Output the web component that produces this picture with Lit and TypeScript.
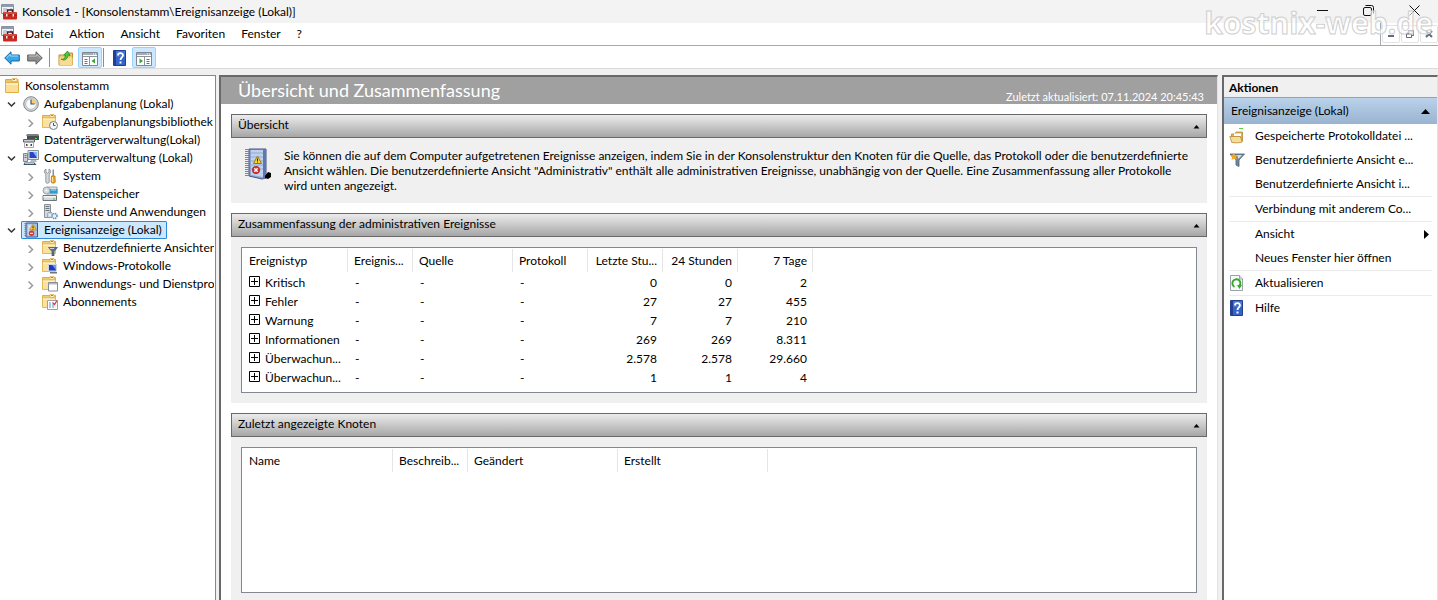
import { LitElement, html, css, svg, nothing, TemplateResult } from "lit";
import { customElement, property, state } from "lit/decorators.js";
import { classMap } from "lit/directives/class-map.js";

const base = css`
  * { box-sizing: border-box; }
  button {
    font: inherit;
    color: inherit;
    background: none;
    border: 0;
    padding: 0;
    margin: 0;
    text-align: left;
    white-space: nowrap;
  }
  svg { display: block; flex: none; }
`;

const folder = svg`
  <path d="M1.500 1.500H14v4H1.500z" fill="#ecc566" stroke="#d9a943"/>
  <path d="M8 .5h5v3H8z" fill="#fdf1cc" stroke="#d9a943" stroke-width=".7"/><path d="M9 1h2v1H9z" fill="#5b93c9"/>
  <path d="M1.500 4.500h13v10h-13z" fill="#fbdf96" stroke="#dfb04c"/>
  <path d="M2 5h12v2H2z" fill="#fdecbc"/>`;
const smallFolder = svg`
  <path d="M.5 1.500h13v4H.5z" fill="#efcb74" stroke="#dcae4c"/>
  <path d="M8 .5h4v3H8z" fill="#fdf1cc" stroke="#d9a943" stroke-width=".7"/><path d="M9 1h2v1H9z" fill="#5b93c9"/>
  <path d="M.5 4h13v9.500H.5z" fill="#fbe1a0" stroke="#e2b85c"/><path d="M1 4.500h12V6H1z" fill="#fdefc4"/>`;
const gear = svg`
  <circle cx="8" cy="11" r="2.500" fill="#e8f0f6" stroke="#7f97aa" stroke-width="1.500" stroke-dasharray="1.300 .7"/>
  <circle cx="12.500" cy="12" r="2.500" fill="#e8f0f6" stroke="#5e8db0" stroke-width="1.500" stroke-dasharray="1.300 .7"/>`;

const art: Record<string, TemplateResult> = {
  mmc: svg`
    <path d="M.5 .5h12v9H.5z" fill="#f2f4f7" stroke="#8a93a0"/><path d="M1 1h11v2H1z" fill="#8e9bb0"/>
    <path d="M2 5h4M2 7h3M9 5h2" stroke="#9aa5b5"/>
    <path d="M6.500 8V6h5v2" fill="none" stroke="#3a2020" stroke-width="1.500"/>
    <rect x="2" y="8" width="14" height="7.500" rx="1" fill="#c62a20"/>
    <path d="M2 11h14" stroke="#9c1f18"/><path d="M3 9h12" stroke="#e8685c"/>
    <path d="M5 10h1.500v2.500H5zM11.500 10H13v2.500h-1.500z" fill="#f4e6e3"/>`,
  back: svg`<path d="M.7 8 7 1.800V5h8.300v6H7v3.200z" fill="#37a8e8" stroke="#1667a8"/><path d="M2.500 8 6.200 4.300V6h8" fill="none" stroke="#9fdcfb"/>`,
  forward: svg`<path d="M15.300 8 9 1.800V5H.7v6H9v3.200z" fill="#8e8e8e" stroke="#5c5c5c"/><path d="M13.500 8 9.800 4.300V6h-8" fill="none" stroke="#c4c4c4"/>`,
  up: svg`<path d="M1 5h6l1-2h6.500v12H1z" fill="#efc76e" stroke="#bd8f35"/><path d="M1.500 7.500h13V15h-13z" fill="#f9dc92"/>
    <path d="M3 9c2 1 4-.5 4.500-4L5.800 5 9.500 1l2.700 4.500-1.900-.3C9.500 9 6.500 11.500 3 9z" fill="#4cc93a" stroke="#21871a" stroke-width=".7"/>`,
  paneLeft: svg`<path d="M.5 2.500h15v13H.5z" fill="#fff" stroke="#82878f"/><path d="M1 3h14v2H1z" fill="#a6acb5"/><path d="M11 4h1M13 4h1" stroke="#fff"/>
    <path d="M1 6.500h14M7.500 7v8" stroke="#8d939c"/><path d="M2.500 9.500h3M2.500 11.500h3M2.500 13.500h3" stroke="#4d74b3"/><path d="M13 8.500v5L9.500 11z" fill="#38a52c"/>`,
  paneRight: svg`<path d="M.5 2.500h15v13H.5z" fill="#fff" stroke="#82878f"/><path d="M1 3h14v2H1z" fill="#a6acb5"/><path d="M11 4h1M13 4h1" stroke="#fff"/>
    <path d="M1 6.500h14M8.500 7v8" stroke="#8d939c"/><path d="M10.500 9.500h3M10.500 11.500h3M10.500 13.500h3" stroke="#4d74b3"/><path d="M3.500 8.500v5L7 11z" fill="#38a52c"/>`,
  help: svg`<path d="M1.500 .5H13.500v15h-12z" fill="#3763c6" stroke="#1f3f91"/><path d="M2 1h2v14H2z" fill="#213f94"/><path d="M4 1h9v6H4z" fill="#5480da" opacity=".6"/>
    <path d="M6 5.500C6 2.500 11 2.500 11 5.300 11 7.300 8.500 7.500 8.500 10" fill="none" stroke="#fff" stroke-width="1.800"/><path d="M7.500 11.500h2v2h-2z" fill="#fff"/>`,
  folder,
  clock: svg`<circle cx="8" cy="8" r="7.300" fill="#d6d9dc" stroke="#7f858b"/><circle cx="8" cy="8" r="5.300" fill="#fbfbf6" stroke="#a9aeb3" stroke-width=".7"/>
    <path d="M8 8V2.800A5.200 5.200 0 0 1 13.200 8z" fill="#f3cf7a"/><path d="M8 3.500V8h3.500" fill="none" stroke="#43566e" stroke-width="1.200"/>`,
  folderClock: svg`${smallFolder}<circle cx="11.500" cy="11.500" r="4" fill="#f4f6f7" stroke="#767e86"/><path d="M11.500 9v2.500h2" fill="none" stroke="#43566e"/>`,
  disk: svg`<path d="M4 2h11l1 2v4H4z" fill="#4b4d50"/><path d="M4 2h11l1 2H3z" fill="#7c7f82"/><path d="M12 6h2v1h-2z" fill="#55e04b"/>
    <path d="M.5 7.500h11V10H.5z" fill="#c9cccf" stroke="#5f6367"/><path d="M1.500 10.500h9v5h-9z" fill="#fafafa" stroke="#a5a9ad"/><path d="M3 12h1.500v2H3zM7.500 12H9v2H7.500z" fill="#444"/>`,
  computer: svg`<path d="M5 .5h10.500v9H5z" fill="#dfe3e8" stroke="#8a9098"/><path d="M6.500 2H14v6H6.500z" fill="#2445c8"/><path d="M10 2h4v6z" fill="#8fb0f2"/>
    <path d="M8 10h5l1 2H7z" fill="#b6bbc1"/><path d="M.5 3.500h4v8h-4z" fill="#cdd2d8" stroke="#7f868e"/><path d="M1.500 5.500h2M1.500 7.500h2" stroke="#6c737b"/>
    <path d="M1.500 12.500h10l2 2.500H.5z" fill="#3d546d"/><path d="M2 13.500h9" stroke="#b7c8d8"/>`,
  tools: svg`<path d="M4 1v3.200l1.500 1L7 4.200V1c2 .8 2.200 4 .2 5.200V14c0 1.700-3.400 1.700-3.400 0V6.200C1.800 5 2 1.800 4 1z" fill="#d5d9dd" stroke="#7d848c" stroke-width=".8"/>
    <path d="M10.500 1.500H12V8h-1.500z" fill="#8c939b"/><path d="M9.500 8H13l.3 6c0 1.500-4.200 1.500-4.200 0z" fill="#eda52a" stroke="#ad6d0d" stroke-width=".7"/><path d="M10.500 9v5" stroke="#ffe09a"/>`,
  storage: svg`<path d="M5 1h10v7H5z" fill="#dde1e5" stroke="#8b9198" stroke-width=".8"/><path d="M8 3h7.500v4.500H8z" fill="#2a9fd0"/><path d="M9 4h5" stroke="#a6e4fa"/>
    <ellipse cx="4.500" cy="4.500" rx="3.500" ry="3.500" fill="#d3d8dd" stroke="#8b9198" stroke-width=".8"/><circle cx="4.500" cy="4.500" r="1" fill="#fff"/>
    <path d="M1 9.500h13.500v5H1z" fill="#d4d7da" stroke="#6e757c"/><path d="M1.500 10h12.500v1.500H1.500z" fill="#f5f6f7"/><path d="M11 12.500h2v1h-2z" fill="#3fca35"/>`,
  services: svg`<path d="M2.500 .5h6v13h-6z" fill="#d6dade" stroke="#8a9198"/><path d="M3.500 2.500h4M3.500 4.500h4M3.500 6.500h4" stroke="#6e7780"/>${gear}`,
  events: svg`<path d="M3 1h11.500v14H3z" fill="#a9bde0" stroke="#40558d"/><path d="M5 2.500h3.500v11H5z" fill="#cfdcf2"/><path d="M2.500 1v14" stroke="#777f93" stroke-width="2" stroke-dasharray="1 1"/>
    <path d="M10 2.500 13.500 8h-7z" fill="#f8d22b" stroke="#b98a0a" stroke-width=".7"/><path d="M10 4.200v2M10 6.800v.8" stroke="#3d2c00"/>
    <circle cx="8.500" cy="11.300" r="2.700" fill="#d7342c"/><path d="M7 11.300h3" stroke="#fff" stroke-width="1"/>`,
  folderFilter: svg`${smallFolder}<path d="M6.500 7.500h9l-3.500 4V16h-2v-4.500z" fill="#58738c" stroke="#3d5366" stroke-width=".7"/><path d="M8 8.500h4" stroke="#c6d6e3"/>`,
  folderScreen: svg`${smallFolder}<path d="M6.500 6.500h8v6.500h-8z" fill="#1639c6" stroke="#cfd4db"/><path d="M10 7h4v5z" fill="#6f95f0"/><path d="M8 14h7v1.500H8z" fill="#6d747d"/>`,
  folderApp: svg`${smallFolder}<path d="M6.500 6.500h9v8.500h-9z" fill="#fff" stroke="#868d96"/><path d="M7 7h8v1.500H7z" fill="#b4bac2"/>`,
  folderCalendar: svg`${smallFolder}<path d="M5.500 6.500h10v9h-10z" fill="#fff" stroke="#9aa0a8"/><path d="M7 9h2M7 11h2M7 13h2M10 11h2M10 13h2" stroke="#5c8fd0" stroke-width="1.200"/><path d="m10.500 8.500 2 2 2.500-4" fill="none" stroke="#d8322a" stroke-width="1.200"/>`,
  openFolder: svg`<path d="M10 .5h4" fill="none" stroke="#55d748" stroke-width="1"/><path d="M2.500 6h3.500l1-2h6.500v9h-11z" fill="#e2b152" stroke="#b58a38" stroke-width=".8"/>
    <path d="M5 5.500h7V8H5z" fill="#fff"/><path d="M.8 8.500h10.500l2 5.500q-4 1.500-10.500.5z" fill="#f7dc97" stroke="#b58a38" stroke-width=".8"/>`,
  filter: svg`<path d="M1 2h14.500L10 8v6.500L7 13V8z" fill="#71899c" stroke="#4a6074" stroke-width=".8"/><path d="M8 3h5L9.500 7z" fill="#d2e1ec"/>
    <path d="M4.500 1 6 3l2.500.2L7 5.200l.7 2.500-2.700-1L2.500 8l.5-2.800L1 3.500 3.500 3z" fill="#f9a61c"/>`,
  refresh: svg`<path d="M1.500 .5h9L13.500 4v11.500h-12z" fill="#f8f9f9" stroke="#9aa1a7"/><path d="M10.500 .5V4h3" fill="#dde1e4" stroke="#9aa1a7"/>
    <path d="M5.500 11.800A4 4 0 1 1 10.300 11" fill="none" stroke="#35a82b" stroke-width="1.900"/><path d="M8 10h5l-2.500 4z" fill="#35a82b"/>`,
  blank: svg``,
};

const icon = (name: string) =>
  html`<svg width="16" height="16" viewBox="0 0 16 16" aria-hidden="true">${art[name]}</svg>`;

@customElement("window-bars")
export class WindowBars extends LitElement {
  static styles = [base, css`
    :host { display: block; position: relative; }
    .title { display: flex; align-items: center; height: 23px; padding: 0 1px; background: #f3f3f3; }
    .title h1 { flex: 1; margin: 0 0 0 5px; font-size: 12px; font-weight: 400; }
    .caption { display: flex; align-items: center; justify-content: center; width: 46px; height: 20px; margin-bottom: 2px; }
    .menu { display: flex; align-items: center; height: 23px; padding-left: 1px; background: #fff; border-bottom: 1px solid #a3a9b0; }
    .menu nav { display: flex; flex: 1; gap: 16px; padding-left: 8px; }
    .mdi { display: flex; align-items: center; gap: 1px; height: 22px; padding-left: 1px; border-left: 1px solid #a3a9b0; }
    .mdi button { display: flex; align-items: center; justify-content: center; width: 18px; height: 18px; border: 1px solid #e3e3e3; border-radius: 2px; }
    .tools { display: flex; align-items: center; height: 23px; padding: 1px 0 0 4px; background: #fff; border-bottom: 1px solid #dadada; }
    .tools button { margin-right: 7px; }
    .tools .on { margin: 0; height: 21px; width: 24px; padding-left: 3px; background: #cce8ff; border: 1px solid #99d1ff; border-radius: 2px; }
    .bar { width: 1px; height: 19px; background: #8d8d8d; }
    .bar.wide { margin: 0 8px 0 -1px; }
    .bar.tight { margin: 0 8px 0 1px; }
    .tools .last { margin-right: 4px; }
    .mark {
      position: absolute; right: 5px; top: 3px;
      font: 700 30px/40px "Open Sans", "Noto Sans", sans-serif;
      color: rgba(255, 255, 255, .6);
      -webkit-text-stroke: 1px #cfcfcf;
      pointer-events: none;
    }
  `];

  render() {
    return html`
      <header class="title">
        ${icon("mmc")}
        <h1>Konsole1 - [Konsolenstamm\\Ereignisanzeige (Lokal)]</h1>
        <button class="caption" aria-label="Minimieren"><svg width="11" height="11"><path d="M0 5.500h11" stroke="#111"/></svg></button>
        <button class="caption" aria-label="Wiederherstellen"><svg width="11" height="11" fill="none" stroke="#111"><rect x=".5" y="2.500" width="8" height="8" rx="1.500"/><path d="M2.500 .5H8.500a2 2 0 0 1 2 2v6"/></svg></button>
        <button class="caption" aria-label="Schließen"><svg width="11" height="11"><path d="m.5.500 10 10m0-10-10 10" stroke="#111"/></svg></button>
      </header>
      <div class="menu">
        ${icon("mmc")}
        <nav>${["Datei", "Aktion", "Ansicht", "Favoriten", "Fenster", "?"].map((m) => html`<button>${m}</button>`)}</nav>
        <div class="mdi">
          <button aria-label="Fenster minimieren"><svg width="8" height="8"><path d="M1 6h6" stroke="#5b6b80" stroke-width="2"/></svg></button>
          <button aria-label="Fenster wiederherstellen"><svg width="8" height="8" fill="none" stroke="#5b6b80"><path d="M.5 3.500h5v4h-5zM0 4h6M2.500 3V.5h5v5H6M2 1h6"/></svg></button>
          <button aria-label="Fenster schließen"><svg width="8" height="8"><path d="m1 1 6 6m0-6-6 6" stroke="#5b6b80" stroke-width="2"/></svg></button>
        </div>
      </div>
      <div class="tools">
        <button aria-label="Zurück">${icon("back")}</button>
        <button aria-label="Vorwärts">${icon("forward")}</button>
        <span class="bar wide"></span>
        <button class="last" aria-label="Eine Ebene nach oben">${icon("up")}</button>
        <button class="on" aria-label="Konsolenstruktur">${icon("paneLeft")}</button>
        <span class="bar tight"></span>
        <button class="last" aria-label="Hilfe">${icon("help")}</button>
        <button class="on" aria-label="Aktionsbereich">${icon("paneRight")}</button>
      </div>
      <div class="mark">kostnix-web.de</div>
    `;
  }
}

interface TreeItem { label: string; icon: string; open?: boolean; leaf?: boolean; children?: TreeItem[]; }

const tree: TreeItem[] = [
  { label: "Aufgabenplanung (Lokal)", icon: "clock", open: true, children: [
    { label: "Aufgabenplanungsbibliothek", icon: "folderClock" },
  ] },
  { label: "Datenträgerverwaltung(Lokal)", icon: "disk", leaf: true },
  { label: "Computerverwaltung (Lokal)", icon: "computer", open: true, children: [
    { label: "System", icon: "tools" },
    { label: "Datenspeicher", icon: "storage" },
    { label: "Dienste und Anwendungen", icon: "services" },
  ] },
  { label: "Ereignisanzeige (Lokal)", icon: "events", open: true, children: [
    { label: "Benutzerdefinierte Ansichten", icon: "folderFilter" },
    { label: "Windows-Protokolle", icon: "folderScreen" },
    { label: "Anwendungs- und Dienstprotokolle", icon: "folderApp" },
    { label: "Abonnements", icon: "folderCalendar", leaf: true },
  ] },
];

@customElement("console-tree")
export class ConsoleTree extends LitElement {
  @state() private selected = "Ereignisanzeige (Lokal)";

  static styles = [base, css`
    :host { display: block; overflow: hidden; padding: 1px 1px 0 2px; background: #fff; border-top: 1px solid #828790; border-right: 1px solid #828790; }
    ul { list-style: none; margin: 0; padding: 0; }
    .top { overflow: hidden; }
    ul ul { padding-left: 19px; }
    .row { display: flex; align-items: center; height: 18px; }
    .toggle { display: flex; justify-content: center; width: 19px; flex: none; }
    .node { display: flex; align-items: center; gap: 5px; height: 18px; padding: 0 4px 0 1px; border: 1px solid transparent; }
    .selected { background: #cce8ff; border-color: #2c8ad8; border-radius: 1px; }
  `];

  private node(item: TreeItem): TemplateResult {
    const arrow = item.open
      ? html`<svg width="9" height="9" fill="none" stroke="#333" stroke-width="1.500"><path d="m1 2.500 3.500 3.500 3.500-3.500"/></svg>`
      : html`<svg width="9" height="9" fill="none" stroke="#9a9a9a" stroke-width="1.500"><path d="M2.500 1.500l4 4-4 4"/></svg>`;
    return html`
      <li>
        <div class="row">
          ${item.leaf ? html`<span class="toggle"></span>` : html`<button class="toggle" aria-label=${item.label}>${arrow}</button>`}
          <button class=${classMap({ node: true, selected: this.selected === item.label })}
            @click=${() => (this.selected = item.label)}>${icon(item.icon)}<span>${item.label}</span></button>
        </div>
        ${item.children ? html`<ul>${item.children.map((c) => this.node(c))}</ul>` : nothing}
      </li>`;
  }

  render() {
    return html`
      <div class="row"><button class="node">${icon("folder")}<span>Konsolenstamm</span></button></div>
      <ul class="top">${tree.map((t) => this.node(t))}</ul>`;
  }
}

@customElement("fold-section")
export class FoldSection extends LitElement {
  @property() heading = "";

  static styles = [base, css`
    :host { display: block; background: #f0f0f0; }
    .head { display: flex; align-items: center; justify-content: space-between; width: 100%; height: 24px; padding: 0 6px; border: 1px solid #696969; background: linear-gradient(#ececec, #a6a6a6); }
    .head svg { margin-top: 2px; }
    h3 { margin: 0 0 2px; font-size: inherit; font-weight: 400; }
    .body { padding: 10px; }
  `];

  render() {
    return html`
      <button class="head" aria-expanded="true"><h3>${this.heading}</h3><svg width="7" height="4"><path d="M3.500 0 6.500 3.500h-6z"/></svg></button>
      <div class="body"><slot></slot></div>`;
  }
}

const summary = [
  ["Kritisch", "0", "0", "2"],
  ["Fehler", "27", "27", "455"],
  ["Warnung", "7", "7", "210"],
  ["Informationen", "269", "269", "8.311"],
  ["Überwachun...", "2.578", "2.578", "29.660"],
  ["Überwachun...", "1", "1", "4"],
];

@customElement("event-overview")
export class EventOverview extends LitElement {
  static styles = [base, css`
    :host { display: flex; flex-direction: column; overflow: hidden; background: #fff; border: solid #696969; border-width: 2px 0 0 2px; border-right: 1px solid #e3e3e3; }
    .banner { display: flex; flex: none; align-items: center; justify-content: space-between; height: 27px; padding: 0 13px 0 17px; background: #a0a0a0; color: #fff; }
    h2 { margin: 0; font-size: 18px; line-height: 27px; font-weight: 400; }
    .stamp { align-self: flex-end; font-size: 11px; line-height: 15px; }
    .sections { display: flex; flex-direction: column; gap: 10px; padding: 10px; }
    .intro { display: flex; gap: 12px; height: 45px; padding-left: 3px; }
    .intro p { margin: 0; flex: 1; line-height: 15px; white-space: nowrap; }
    .box { height: 146px; background: #fff; border: 1px solid #828790; }
    table { border-collapse: separate; border-spacing: 0; table-layout: fixed; width: 571px; }
    .recent { width: 526px; }
    th, td { height: 19px; padding: 0 6px; font-weight: 400; text-align: left; white-space: nowrap; overflow: hidden; line-height: 16px; }
    th { height: 25px; background: linear-gradient(#e5e5e5, #e5e5e5) right center / 1px 23px no-repeat; }
    th:first-child, td { padding-left: 7px; }
    .num { text-align: right; }
    .type { display: flex; align-items: center; gap: 5px; }
    .type svg { margin-bottom: 2px; }
    .c106 { width: 106px; } .c65 { width: 65px; } .c100 { width: 100px; } .c75 { width: 75px; } .c150 { width: 150px; } .c151 { width: 151px; }
  `];

  render() {
    return html`
      <div class="banner"><h2>Übersicht und Zusammenfassung</h2><span class="stamp">Zuletzt aktualisiert: 07.11.2024 20:45:43</span></div>
      <div class="sections">
        <fold-section heading="Übersicht">
          <div class="intro">
            <svg width="28" height="34" viewBox="0 0 28 34" aria-hidden="true">
              <path d="M5 1h17v29l-4 1L5 28z" fill="#8fa5cf" stroke="#41558e"/>
              <path d="M7 2h12v27L7 27z" fill="#c0d1ee"/><path d="M7 5h12M7 9h12M7 13h12M7 17h12M7 21h12" stroke="#93a9d2"/>
              <path d="M19 2l3-1v29l-3 1z" fill="#5e77b0"/>
              <path d="M3 1v27" stroke="#7d8698" stroke-width="4" stroke-dasharray="1 1"/>
              <path d="m13.500 8 4 7.500h-8z" fill="#fbd72b" stroke="#9c7a08"/><path d="M13.500 10.500v2.500M13.500 13.500v1" stroke="#222"/>
              <circle cx="12" cy="22" r="3.700" fill="#d2322d" stroke="#8f1a17" stroke-width=".6"/><path d="m10.300 20.300 3.400 3.400m0-3.400-3.400 3.400" stroke="#fff" stroke-width="1.400"/>
              <path d="M21 28l3-4 3 1 0 4-3 2-3-1z" fill="#000"/>
            </svg>
            <p>Sie können die auf dem Computer aufgetretenen Ereignisse anzeigen, indem Sie in der Konsolenstruktur den Knoten für die Quelle, das Protokoll oder die benutzerdefinierte<br>Ansicht wählen. Die benutzerdefinierte Ansicht "Administrativ" enthält alle administrativen Ereignisse, unabhängig von der Quelle. Eine Zusammenfassung aller Protokolle<br>wird unten angezeigt.</p>
          </div>
        </fold-section>
        <fold-section heading="Zusammenfassung der administrativen Ereignisse">
          <div class="box">
            <table>
              <thead><tr>
                <th class="c106">Ereignistyp</th><th class="c65">Ereignis...</th><th class="c100">Quelle</th><th class="c75">Protokoll</th>
                <th class="c75 num">Letzte Stu...</th><th class="c75 num">24 Stunden</th><th class="c75 num">7 Tage</th>
              </tr></thead>
              <tbody>
                ${summary.map(([type, hour, day, week]) => html`<tr>
                  <td><span class="type"><svg width="11" height="11" fill="none" stroke="#000"><path d="M.5.500h10v10H.5zM2 5.500h7M5.500 2v7"/></svg>${type}</span></td>
                  <td>-</td><td>-</td><td>-</td>
                  <td class="num">${hour}</td><td class="num">${day}</td><td class="num">${week}</td>
                </tr>`)}
              </tbody>
            </table>
          </div>
        </fold-section>
        <fold-section heading="Zuletzt angezeigte Knoten">
          <div class="box">
            <table class="recent">
              <thead><tr><th class="c151">Name</th><th class="c75">Beschreib...</th><th class="c150">Geändert</th><th class="c150">Erstellt</th></tr></thead>
            </table>
          </div>
        </fold-section>
      </div>`;
  }
}

const actionGroups = [
  [["openFolder", "Gespeicherte Protokolldatei ..."], ["filter", "Benutzerdefinierte Ansicht e..."], ["blank", "Benutzerdefinierte Ansicht i..."]],
  [["blank", "Verbindung mit anderem Co..."]],
  [["blank", "Ansicht"], ["blank", "Neues Fenster hier öffnen"]],
  [["refresh", "Aktualisieren"]],
  [["help", "Hilfe"]],
];

@customElement("action-pane")
export class ActionPane extends LitElement {
  static styles = [base, css`
    :host { display: block; overflow: hidden; background: #fff; border: solid #696969; border-width: 2px 0 0 2px; border-right: 1px solid #e3e3e3; }
    h2 { margin: 0; height: 21px; padding-left: 5px; font-size: 12px; line-height: 21px; background: #f0f0f0; border-bottom: 1px solid #a0a0a0; }
    .target { display: flex; align-items: center; justify-content: space-between; width: 100%; height: 26px; padding: 0 7px; background: linear-gradient(#bad2ea, #99b4d1); }
    .group { margin: 0 5px; }
    .group + .group { border-top: 1px solid #ebebeb; }
    .group button { display: flex; align-items: center; gap: 10px; width: 100%; height: 24px; }
    .label { flex: 1; }
    .more { margin-right: 3px; }
  `];

  render() {
    return html`
      <h2>Aktionen</h2>
      <button class="target">Ereignisanzeige (Lokal)<svg width="9" height="5"><path d="M4.500 0 9 5H0z"/></svg></button>
      ${actionGroups.map((g) => html`<div class="group">${g.map(([i, label]) => html`
        <button>${icon(i)}<span class="label">${label}</span>${label === "Ansicht" ? html`<svg class="more" width="5" height="9"><path d="M0 0l5 4.500L0 9z"/></svg>` : nothing}</button>`)}</div>`)}`;
  }
}

@customElement("app-root")
export class AppRoot extends LitElement {
  static styles = css`
    :host {
      display: flex; flex-direction: column; height: 100vh; overflow: hidden;
      font-family: Lato, "Open Sans", "Noto Sans", sans-serif; font-size: 12px; line-height: 16px; color: #000; background: #f0f0f0;
    }
    main { display: grid; flex: 1; min-height: 0; grid-template-columns: 216px minmax(0, 1fr) 216px; grid-template-rows: minmax(0, 1fr); padding-top: 6px; }
    event-overview { margin: 0 4px 0 3px; }
  `;

  render() {
    return html`
      <window-bars></window-bars>
      <main>
        <console-tree></console-tree>
        <event-overview></event-overview>
        <action-pane></action-pane>
      </main>`;
  }
}
